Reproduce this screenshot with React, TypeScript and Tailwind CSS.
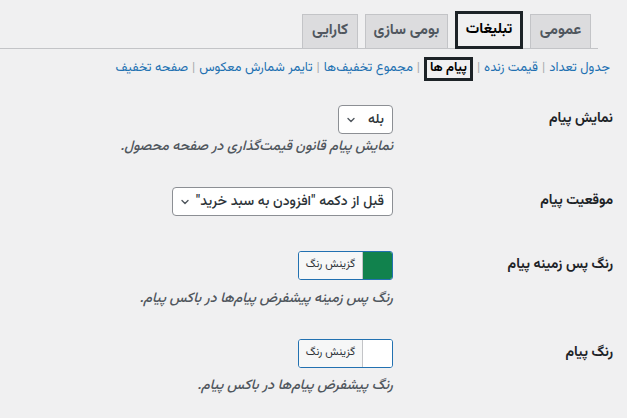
import React from "react";

const FONT = '"Vazirmatn", "Noto Sans Arabic", "DejaVu Sans", sans-serif';

function Chevron() {
  return (
    <svg width="10" height="10" viewBox="0 0 10 10" fill="none" stroke="#50575e" strokeWidth="1.4" strokeLinecap="round" strokeLinejoin="round">
      <path d="M2 3.5 L5 6.5 L8 3.5" />
    </svg>
  );
}

function Select({ text, width }: { text: string; width: string }) {
  return (
    <div className={`flex h-[29px] items-center justify-between rounded-[4px] border border-[#8c8f94] bg-white pr-[8px] pl-[7px] text-[14px] font-medium text-[#2c3338] ${width}`}>
      <span className="leading-none">{text}</span>
      <Chevron />
    </div>
  );
}

function ColorButton({ color }: { color?: string }) {
  return (
    <div className="flex h-[29px] w-[95px] overflow-hidden rounded-[3px] border border-[#2271b1] bg-white">
      <div className={`w-[30px] border-l border-[#c3c4c7] ${color ?? "bg-white"}`} />
      <div className="flex flex-1 items-center justify-center bg-[#f6f7f7] text-[11px] text-[#2c3338]">گزینش رنگ</div>
    </div>
  );
}

function Label({ children }: { children: React.ReactNode }) {
  return (
    <div className="w-[210px] shrink-0 pl-[10px] text-[14px] font-bold text-[#1d2327]">{children}</div>
  );
}

export default function App() {
  const tabs = [
    { t: "عمومی", active: false, w: "w-[61px]" },
    { t: "تبلیغات", active: true, w: "w-[68px]" },
    { t: "بومی سازی", active: false, w: "w-[83px]" },
    { t: "کارایی", active: false, w: "w-[56px]" },
  ];
  const links = ["جدول تعداد", "قیمت زنده", "پیام ها", "مجموع تخفیف‌ها", "تایمر شمارش معکوس", "صفحه تخفیف"];
  return (
    <div dir="rtl" className="min-h-[418px] w-[627px] overflow-hidden bg-[#f0f0f1]" style={{ fontFamily: FONT }}>
      <div className="ml-0 mr-[29px] flex items-end gap-[7px] border-b border-[#c3c4c7] pt-[12px] pr-[7px]">
        {tabs.map((tab) =>
          tab.active ? (
            <div key={tab.t} className={`-mb-px flex h-[38px] -mt-[1px] items-center justify-center border-[3px] border-[#1d2327] bg-[#f0f0f1] text-[15px] font-bold text-black ${tab.w}`}>
              {tab.t}
            </div>
          ) : (
            <div key={tab.t} className={`-mb-px flex h-[35px] items-center justify-center border border-[#c3c4c7] bg-[#dcdcde] text-[15px] font-bold text-[#50575e] ${tab.w}`}>
              {tab.t}
            </div>
          )
        )}
      </div>

      <div className="mt-[10px] mr-[17px] flex h-[20px] items-center whitespace-nowrap text-[13px] text-[#2271b1]">
        {links.map((l, i) => (
          <React.Fragment key={l}>
            {l === "پیام ها" ? (
              <span className="flex h-[24px] items-center border-[3px] border-[#1d2327] px-[3px] font-bold text-black">{l}</span>
            ) : (
              <span>{l}</span>
            )}
            {i < links.length - 1 && <span className="mx-[4px] text-[#a7aaad]">|</span>}
          </React.Fragment>
        ))}
      </div>

      <div className="mr-[14px]">
        <div className="mt-[26px] flex">
          <Label><div className="flex h-[29px] items-center">نمایش پیام</div></Label>
          <div className="pr-[10px]">
            <Select text="بله" width="w-[55px]" />
            <div className="mt-[4px] text-[14px] font-medium italic leading-[18px] text-[#50575e]">نمایش پیام قانون قیمت‌گذاری در صفحه محصول.</div>
          </div>
        </div>

        <div className="mt-[31px] flex">
          <Label><div className="flex h-[29px] items-center">موقعیت پیام</div></Label>
          <div className="pr-[10px]">
            <Select text={'قبل از دکمه "افزودن به سبد خرید"'} width="w-[221px]" />
          </div>
        </div>

        <div className="mt-[35px] flex">
          <Label><div className="flex h-[29px] items-center">رنگ پس زمینه پیام</div></Label>
          <div className="pr-[10px]">
            <ColorButton color="bg-[#11824d]" />
            <div className="mt-[10px] text-[14px] font-medium italic leading-[18px] text-[#50575e]">رنگ پس زمینه پیشفرض پیام‌ها در باکس پیام.</div>
          </div>
        </div>

        <div className="mt-[31px] flex">
          <Label><div className="flex h-[29px] items-center">رنگ پیام</div></Label>
          <div className="pr-[10px]">
            <ColorButton />
            <div className="mt-[9px] text-[14px] font-medium italic leading-[18px] text-[#50575e]">رنگ پیشفرض پیام‌ها در باکس پیام.</div>
          </div>
        </div>
      </div>
    </div>
  );
}
